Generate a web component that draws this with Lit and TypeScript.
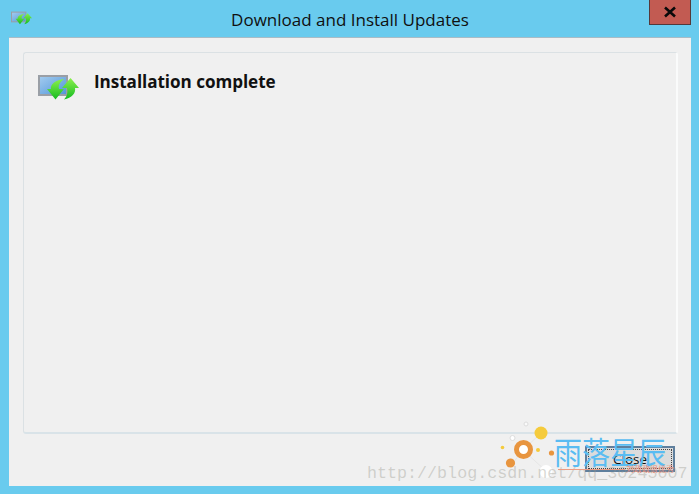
import { LitElement, html, css, svg } from "lit";
import { customElement } from "lit/decorators.js";

const updateIcon = (w: number, h: number) => html`<svg class="ic" width=${w} height=${h} viewBox="0 0 41 27">
  <defs>
    <linearGradient id="scr" x1="0" y1="0" x2="1" y2="1"><stop offset="0" stop-color="#a5cdf0"/><stop offset="1" stop-color="#4f94d8"/></linearGradient>
    <linearGradient id="gr" x1="0" y1="0" x2="0" y2="1"><stop offset="0" stop-color="#8cf04e"/><stop offset="1" stop-color="#14bb20"/></linearGradient>
  </defs>
  <rect x="1" y="2" width="28" height="19" fill="url(#scr)" stroke="#9a9fa6" stroke-width="2"/>
  ${svg`<path d="M26 5 C18 6 12 10 13 15 L9 15 L17.500 25.500 L26 15 L21 15 C20 11 22 8 26 5Z" fill="url(#gr)"/>
  <path d="M26 25.500 C34 24 38 19 37 14 L41 14 L32.500 4 L24 14 L29 14 C30 19 29 22 26 25.500Z" fill="url(#gr)"/>`}
</svg>`;

@customElement("app-root")
export class AppRoot extends LitElement {
  static styles = css`
    :host { display: block; width: 699px; height: 494px; font-family: "Open Sans", "Noto Sans", sans-serif; }
    .win { position: relative; width: 699px; height: 494px; box-sizing: border-box; background: #69cbee; padding: 0 8px 8px 9px; display: flex; flex-direction: column; overflow: hidden; }
    .bar { height: 37px; flex: none; display: flex; align-items: flex-start; position: relative; }
    .appicon { margin: 11px 0 0 2px; }
    .ic { display: block; }
    .title { position: absolute; left: 0; right: 0; top: 8px; text-align: center; font-size: 17px; line-height: 23px; color: #101010; }
    .x { position: absolute; right: 0; top: 0; width: 42px; height: 25px; box-sizing: border-box; background: #c25b52; border: 1px solid #54393a; border-top: 0; display: flex; align-items: center; justify-content: center; }
    .client { flex: 1; background: #f0f0f0; border-top: 1px solid #a9bcc6; padding: 14px 13px 0 14px; display: flex; flex-direction: column; }
    .panel { height: 382px; box-sizing: border-box; border: 1px solid #dbe1e4; border-right: 2px solid #fafbfb; border-bottom: 2px solid #d9e3e8; border-radius: 3px; padding: 21px 0 0 14px; display: flex; gap: 15px; align-items: flex-start; }
    .head { font-weight: 700; font-size: 17.1px; line-height: 20px; color: #111; margin-top: -2px; letter-spacing: -0.05px; }
    .mark { position: absolute; left: 0; top: 0; width: 699px; height: 494px; pointer-events: none; }
    .btn { position: absolute; left: 585px; top: 446px; width: 90px; height: 26px; box-sizing: border-box; border: 2px solid #5f7f9d; background: #dcdcdc; outline: 1px dotted #444; outline-offset: -4px; display: flex; align-items: center; justify-content: center; font: 13.5px "Open Sans", sans-serif; color: #111; padding: 0; }
    .url { position: absolute; left: 367px; top: 463px; font: 16.7px/22px "Liberation Mono", monospace; color: rgba(150,150,140,.38); white-space: nowrap; }
    .brand { position: absolute; left: 554px; top: 430px; font: 28px/38px "Noto Sans CJK SC", sans-serif; color: #5abcf2; white-space: nowrap; transform: scaleY(1.1); transform-origin: 0 0; }
    .sub { position: absolute; left: 625px; top: 464px; width: 50px; text-align: center; font: 8px/10px "Noto Sans CJK SC", sans-serif; color: #e8907a; white-space: nowrap; }
    .line { position: absolute; left: 558px; top: 469px; width: 67px; height: 1px; background: #ec9c84; }
    .deco { position: absolute; left: 0; top: 0; }
  `;
  render() {
    return html`<div class="win">
      <div class="bar">
        <div class="appicon">${updateIcon(21, 14)}</div>
        <div class="title">Download and Install Updates</div>
        <div class="x"><svg width="14" height="12" viewBox="0 0 14 12"><path d="M2 1.500 L12 10.500 M12 1.500 L2 10.500" stroke="#0a0a0a" stroke-width="2.6" fill="none"/></svg></div>
      </div>
      <div class="client">
        <div class="panel">
          ${updateIcon(41, 27)}
          <div class="head">Installation complete</div>
        </div>
      </div>
      <div class="mark">
        <button class="btn">Close</button>
        <svg class="deco" width="699" height="494">
          <g stroke="#e6e6e6" stroke-width="1" fill="none"><path d="M523 450 L541 433 M523 450 L546 471 M523 450 L513 463"/></g>
          <circle cx="541" cy="433" r="6.500" fill="#f5cb3c"/>
          <circle cx="526" cy="424" r="2" fill="#fafafa" stroke="#ddd"/>
          <circle cx="512.500" cy="438" r="2.500" fill="#fff" stroke="#ddd"/>
          <circle cx="523.500" cy="449.500" r="7" fill="#fff" stroke="#e8953f" stroke-width="5"/>
          <circle cx="502.500" cy="447.500" r="1.800" fill="#f5cb3c"/>
          <circle cx="538" cy="450" r="2" fill="#f5cb3c"/>
          <circle cx="551.500" cy="453" r="2.600" fill="#e8953f"/>
          <circle cx="510.500" cy="463" r="4.600" fill="#e8953f"/>
          <circle cx="546" cy="471.500" r="6.500" fill="#fff"/>
        </svg>
        <div class="url">http://blog.csdn.net/qq_30245007</div>
        <div class="brand">雨落星辰</div>
        <div class="line"></div>
        <div class="sub">刘政政很优秀</div>
      </div>
    </div>`;
  }
}
